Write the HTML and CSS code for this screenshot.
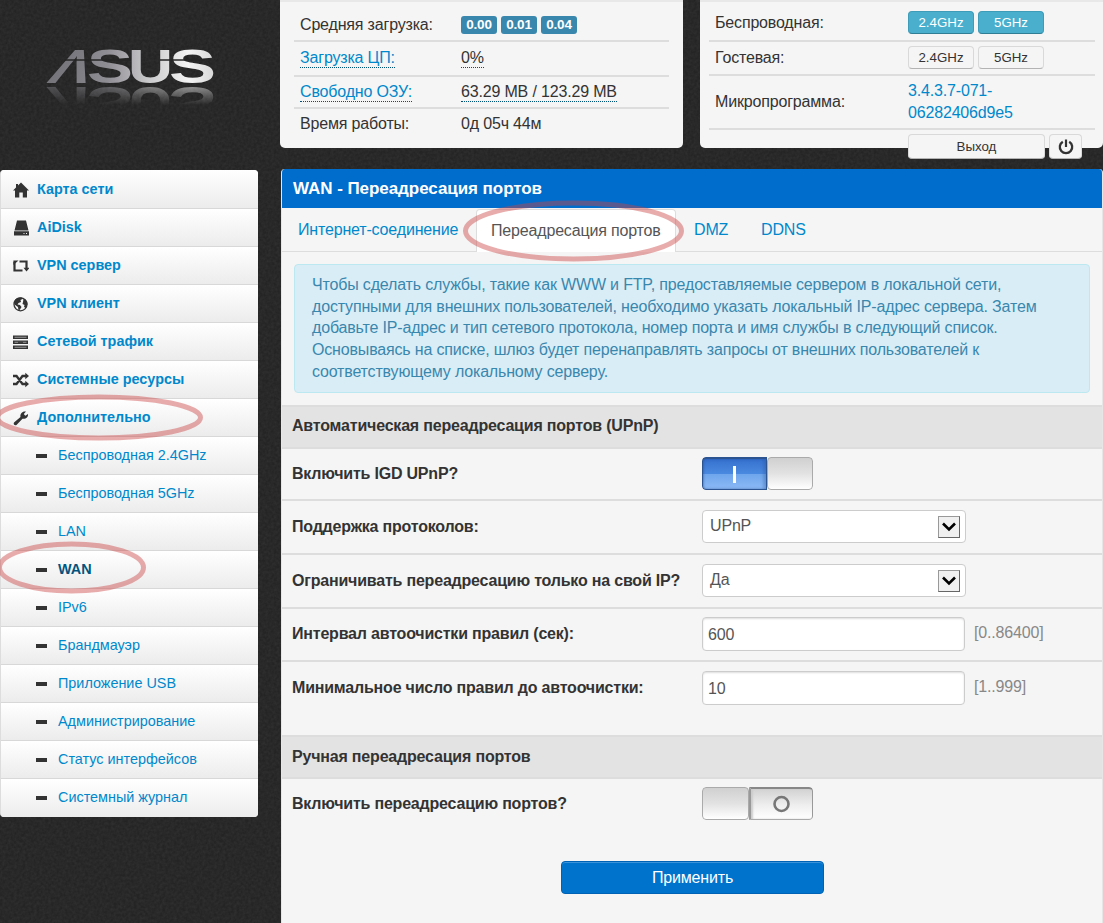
FILE: index.html
```html
<!DOCTYPE html>
<html lang="ru">
<head>
<meta charset="utf-8">
<title>WAN - Переадресация портов</title>
<link rel="stylesheet" href="styles.css">
</head>
<body>
<header class="top">
  <div class="brand">
    <svg class="logo" width="258" height="120" viewBox="0 0 258 120" role="img" aria-label="ASUS">
      <defs>
        <linearGradient id="metal" gradientUnits="userSpaceOnUse" x1="50" y1="0" x2="213" y2="0">
          <stop offset="0" stop-color="#77757c"/><stop offset=".35" stop-color="#8f8d94"/><stop offset=".6" stop-color="#c9c8ca"/><stop offset=".85" stop-color="#f4f4f4"/><stop offset="1" stop-color="#d9d9d9"/>
        </linearGradient>
        <linearGradient id="metalA" gradientUnits="userSpaceOnUse" x1="50" y1="0" x2="90" y2="0">
          <stop offset="0" stop-color="#77757c"/><stop offset="1" stop-color="#85838a"/>
        </linearGradient>
        <linearGradient id="fade" gradientUnits="userSpaceOnUse" x1="0" y1="86" x2="0" y2="105">
          <stop offset="0" stop-color="#fff" stop-opacity=".55"/><stop offset="1" stop-color="#fff" stop-opacity="0"/>
        </linearGradient>
        <mask id="mirror" maskUnits="userSpaceOnUse" x="40" y="86" width="190" height="20"><rect x="40" y="86" width="190" height="20" fill="url(#fade)"/></mask>
        <g id="word" class="word" fill="url(#metal)">
          <text x="46" y="83" transform="translate(33.5 0) skewX(-22)" textLength="40" lengthAdjust="spacingAndGlyphs" fill="url(#metalA)">Λ</text>
          <text x="87" y="83" textLength="46" lengthAdjust="spacingAndGlyphs">S</text>
          <text x="128" y="83" textLength="45" lengthAdjust="spacingAndGlyphs">U</text>
          <text x="169" y="83" textLength="47" lengthAdjust="spacingAndGlyphs">S</text>
        </g>
      </defs>
      <use href="#word"/>
      <path d="M64 60H131M160 60H205" stroke="#262626" stroke-width="1.4"/>
      <g mask="url(#mirror)"><use href="#word" transform="translate(0 170) scale(1 -1)"/></g>
    </svg>
  </div>
  <section class="panel load">
    <div class="row r1"><span>Средняя загрузка:</span><span class="badges"><b>0.00</b><b>0.01</b><b>0.04</b></span></div>
    <div class="row r2"><span><a class="dot">Загрузка ЦП:</a></span><span><i class="dot">0%</i></span></div>
    <div class="row r3"><span><a class="dot">Свободно ОЗУ:</a></span><span><i class="dot">63.29 MB / 123.29 MB</i></span></div>
    <div class="row r4"><span>Время работы:</span><span>0д 05ч 44м</span></div>
  </section>
  <section class="panel net">
    <div class="row n1"><span>Беспроводная:</span><span class="btns"><button class="mini on">2.4GHz</button><button class="mini on">5GHz</button></span></div>
    <div class="row n2"><span>Гостевая:</span><span class="btns"><button class="mini">2.4GHz</button><button class="mini">5GHz</button></span></div>
    <div class="row n3"><span>Микропрограмма:</span><a class="fw">3.4.3.7-071-<br>06282406d9e5</a></div>
    <div class="row n4"><span></span><span class="btns"><button class="mini exit">Выход</button><button class="mini power" aria-label="Питание"><svg width="16" height="16" viewBox="0 0 16 16"><path d="M4.800 2.700a6.200 6.200 0 1 0 6.400 0" fill="none" stroke="#333" stroke-width="2.300"/><path d="M8 .5V8" stroke="#333" stroke-width="2.200"/></svg></button></span></div>
  </section>
</header>

<div class="page">
  <nav class="side">
    <a class="item"><svg viewBox="0 0 16 16"><path d="M8 .5 16 8.500H14V15.500H9.800V10.500H6.300V15.500H2V8.500H0L3 5.500V2H5V3.500Z"/></svg>Карта сети</a>
    <a class="item"><svg viewBox="0 0 16 16"><path d="M4 .5H13L15.500 10.500H1.500ZM1 11.300H16V15.500H1ZM10.500 13v1h1v-1ZM13 13v1h1v-1Z" fill-rule="evenodd"/></svg>AiDisk</a>
    <a class="item"><svg viewBox="0 0 16 16"><path d="M1.500 4V12.500H9.500M6.500 3.500H13.500V10.500" fill="none" stroke="#333" stroke-width="2.200"/><path d="M.4 2.500H5.500L.4 7ZM10.500 9.800H16.500L13.500 13.500Z"/></svg>VPN сервер</a>
    <a class="item"><svg viewBox="0 0 16 16"><circle cx="7.500" cy="8.300" r="6.500" fill="none" stroke="#333" stroke-width="1.300"/><path d="M1 6C2 2 6 1 9 1.500L9.500 3 7.500 4 8 6 5.500 7 4.500 8.500 7 9 8.500 11 7 13.500 5.500 14.500 5 11 1.500 8.500ZM10.500 3 13 4 14.500 8 13 12 11 11 11.500 9 9.500 8 10 6Z"/></svg>VPN клиент</a>
    <a class="item"><svg viewBox="0 0 16 16"><path d="M0 1.500H15V5H0ZM0 6.500H15V10H0ZM0 11.500H15V15H0Z"/><path d="M1.500 3.250H13.500M1.500 8.250H13.500M1.500 13.250H13.500" stroke="#999" stroke-width="1.200"/><path d="M5 8.250H10" stroke="#333" stroke-width="1.200"/></svg>Сетевой трафик</a>
    <a class="item"><svg viewBox="0 0 16 16"><path d="M0 4H3.500L9.500 12H13M0 12H3.500L9.500 4H13" fill="none" stroke="#333" stroke-width="2.300"/><path d="M12.300 .8 16 4 12.300 7.200ZM12.300 8.800 16 12 12.300 15.200Z"/></svg>Системные ресурсы</a>
    <a class="item"><svg viewBox="0 0 16 16"><path d="M1 12.500 7.500 7C6.800 3.500 9.500.8 13 1.500L10.800 4 12.300 5.700 15 4C15.500 7.500 12.500 9.300 9.500 8.700L3.500 15C1.500 16 0 14 1 12.500Z"/></svg>Дополнительно</a>
    <a class="item sub">Беспроводная 2.4GHz</a>
    <a class="item sub">Беспроводная 5GHz</a>
    <a class="item sub">LAN</a>
    <a class="item sub current">WAN</a>
    <a class="item sub">IPv6</a>
    <a class="item sub">Брандмауэр</a>
    <a class="item sub">Приложение USB</a>
    <a class="item sub">Администрирование</a>
    <a class="item sub">Статус интерфейсов</a>
    <a class="item sub">Системный журнал</a>
  </nav>

  <main class="content">
    <h1 class="title">WAN - Переадресация портов</h1>
    <div class="tabs"><a class="tab t1">Интернет-соединение</a><a class="tab active">Переадресация портов</a><a class="tab t3">DMZ</a><a class="tab">DDNS</a></div>
    <p class="info">Чтобы сделать службы, такие как WWW и FTP, предоставляемые сервером в локальной сети,<br>доступными для внешних пользователей, необходимо указать локальный IP-адрес сервера. Затем<br>добавьте IP-адрес и тип сетевого протокола, номер порта и имя службы в следующий список.<br>Основываясь на списке, шлюз будет перенаправлять запросы от внешних пользователей к<br>соответствующему локальному серверу.</p>
    <h2 class="section">Автоматическая переадресация портов (UPnP)</h2>
    <div class="field f1"><label>Включить IGD UPnP?</label><span class="switch yes"><span class="track"><svg width="3" height="17"><rect width="3" height="17" fill="#fff"/></svg></span><span class="knob"></span></span></div>
    <div class="field f2"><label>Поддержка протоколов:</label><span class="box select">UPnP<span class="arrow"><svg width="14" height="10" viewBox="0 0 14 10"><path d="M1 1.500 7 7.500 13 1.500" fill="none" stroke="#000" stroke-width="2.600"/></svg></span></span></div>
    <div class="field f3"><label>Ограничивать переадресацию только на свой IP?</label><span class="box select">Да<span class="arrow"><svg width="14" height="10" viewBox="0 0 14 10"><path d="M1 1.500 7 7.500 13 1.500" fill="none" stroke="#000" stroke-width="2.600"/></svg></span></span></div>
    <div class="field f4"><label>Интервал автоочистки правил (сек):</label><span class="box text">600</span><span class="range">[0..86400]</span></div>
    <div class="field f5"><label>Минимальное число правил до автоочистки:</label><span class="box text">10</span><span class="range">[1..999]</span></div>
    <h2 class="section manual">Ручная переадресация портов</h2>
    <div class="field f6"><label>Включить переадресацию портов?</label><span class="switch no"><span class="knob"></span><span class="track"><svg width="18" height="18" viewBox="0 0 18 18"><circle cx="8.500" cy="9" r="7" fill="none" stroke="#777" stroke-width="2.600"/></svg></span></span></div>
    <div class="actions"><button class="apply">Применить</button></div>
  </main>
</div>

<svg class="marks" width="1103" height="923" aria-hidden="true">
  <ellipse cx="573.500" cy="231" rx="108" ry="28"/>
  <ellipse cx="99" cy="417.500" rx="101.500" ry="20.500"/>
  <ellipse cx="71.500" cy="567.500" rx="72" ry="23.500"/>
</svg>
</body>
</html>
```
FILE: styles.css
```css
* { box-sizing: border-box; }
body {
  margin: 0;
  position: relative;
  width: 1103px;
  height: 923px;
  overflow: hidden;
  font: 16px/22px "Liberation Sans", Arial, sans-serif;
  letter-spacing: -.17px;
  color: #333;
  background: #272727 url("data:image/svg+xml,%3Csvg xmlns='http://www.w3.org/2000/svg' width='200' height='200'%3E%3Cfilter id='n'%3E%3CfeTurbulence type='fractalNoise' baseFrequency='.35' numOctaves='2' stitchTiles='stitch'/%3E%3CfeColorMatrix values='0 0 0 0 .5 0 0 0 0 .5 0 0 0 0 .5 .12 0 0 0 -.03'/%3E%3C/filter%3E%3Crect width='200' height='200' fill='%23242424'/%3E%3Crect width='200' height='200' filter='url(%23n)'/%3E%3C/svg%3E");
}
a { color: #0088cc; text-decoration: none; }
button { font-family: inherit; padding: 0; color: #333; }

.top { display: grid; grid-template-columns: 258px 403px 403px; height: 169px; align-items: start; }
.brand { height: 120px; }
.logo { display: block; }
.word { font: bold 48px "Liberation Sans", Arial, sans-serif; letter-spacing: 0; }
.panel { height: 148px; background: #f5f5f5; border-radius: 0 0 5px 5px; border-top: 2px solid #e8e8e8; }
.load { margin-left: 22px; width: 403px; padding: 0 14px; }
.net { margin-left: 39px; width: 403px; padding: 0 8px 0 9px; }
.row { display: flex; align-items: center; border-bottom: 2px solid #ddd; }
.load .row > :first-child { width: 167px; padding-left: 6px; }
.net .row > :first-child { width: 199px; padding-left: 6px; }
.r1 { height: 40px; padding-top: 8px; }
.r2 { height: 35px; padding-bottom: 2px; }
.r3 { height: 32px; }
.r4 { height: 31px; border: 0; padding-bottom: 2px; }
.n1 { height: 40px; padding-top: 3px; }
.n2 { height: 34px; padding-bottom: 1px; }
.n3 { height: 54px; }
.n4 { height: 34px; border: 0; }
.dot { font-style: normal; display: inline-block; line-height: 19px; border-bottom: 1px dotted #00507a; }
.badges { display: flex; gap: 4px; }
.badges b { width: 36px; height: 18px; border-radius: 3px; background: #3a87ad; color: #fff; font-size: 13.500px; line-height: 18px; text-align: center; }
.btns { display: flex; gap: 4px; flex: none; }
.mini { width: 66px; height: 23px; border: 1px solid #d9d9d9; border-bottom-color: #b3b3b3; border-radius: 4px; background: #f5f5f5; font-size: 13.300px; line-height: 20px; }
.mini.on { background: #49afcd; border-color: #3f9cb8; border-bottom-color: #2f7e96; color: #fff; }
.n4 .btns { padding-bottom: 1px; }
.mini.exit { width: 137px; height: 25px; }
.mini.power { width: 33px; height: 25px; display: flex; align-items: center; justify-content: center; }

.page { display: grid; grid-template-columns: 258px 822px; column-gap: 23px; height: 754px; }
.side { margin-top: 1px; height: 647px; border-radius: 4px; overflow: hidden; border-left: 1px solid #ddd; background: #eee; }
.item { display: flex; align-items: center; height: 38px; padding: 0 0 1px 12px; gap: 8px; font-size: 14.400px; letter-spacing: 0; font-weight: bold; background: linear-gradient(#fff, #ececec); border-bottom: 1px solid #d8d8d8; }
.item:first-child { height: 39px; }
.item:last-child { border: 0; padding-bottom: 2px; }
.item svg { width: 16px; height: 16px; fill: #333; position: relative; top: 1px; }
.sub { font-weight: normal; gap: 11px; padding-left: 35px; }
.sub::before { content: ""; width: 11px; height: 4px; margin-top: 2px; background: #333; }
.current { font-weight: bold; color: #005580; }

.content { background: #f5f5f5; border-radius: 4px 4px 0 0; overflow: hidden; border-right: 1px solid #e6e6e6; border-left: 1px solid #e6e6e6; }
.title { margin: 0 -1px; height: 39px; padding-left: 12px; background: #006dcc; color: #fff; font-size: 17px; letter-spacing: -.06px; line-height: 39px; }
.tabs { display: flex; height: 44px; border-bottom: 1px solid #ddd; padding-top: 1px; line-height: 42px; }
.tab { padding-left: 16px; }
.t1 { width: 194px; }
.active { width: 200px; height: 43px; padding-left: 14px; background: #fff; border: 1px solid #ddd; border-bottom: 0; border-radius: 4px 4px 0 0; color: #555; line-height: 41px; }
.t3 { width: 67px; margin-left: 2px; }
.info { margin: 12px 12px 12px; height: 129px; padding: 9px 17px; border: 1px solid #bce8f1; border-radius: 4px; background: #d9edf7; color: #3a87ad; line-height: 21.700px; white-space: nowrap; }
.section { margin: 0; height: 44px; padding-left: 10px; border: solid #ddd; border-width: 2px 0; background: #e3e3e3; font-size: 16px; letter-spacing: -.19px; line-height: 38px; }
.manual { line-height: 40px; }
.field { display: flex; align-items: flex-start; padding: 8px 0 0 10px; border-bottom: 2px solid #ddd; }
.field label { width: 410px; font-weight: bold; letter-spacing: -.2px; line-height: 33px; white-space: nowrap; }
.f1 { height: 52px; }
.f2, .f3 { height: 54px; padding-top: 9px; }
.f4 { height: 53px; }
.f5 { height: 73px; padding-top: 9px; border: 0; }
.f6 { height: 82px; border: 0; }
.box { width: 264px; height: 33px; background: #fff; border: 1px solid #ccc; border-radius: 4px; color: #555; line-height: 29px; }
.select { display: flex; justify-content: space-between; padding: 0 5px 0 7px; }
.text { height: 34px; width: 263px; padding-left: 5px; line-height: 33px; box-shadow: inset 0 1px 2px #ddd; }
.arrow { display: flex; align-items: center; justify-content: center; width: 22px; height: 22px; margin-top: 5px; background: #f0f0f0; border: 1px solid #999; border-right-color: #666; border-bottom-color: #666; }
.range { padding-left: 9px; color: #888; line-height: 31px; }
.switch { display: flex; width: 111px; height: 33px; border-radius: 4px; overflow: hidden; }
.track { display: flex; align-items: center; justify-content: center; width: 65px; }
.yes .track { background: linear-gradient(#3571cf, #4b8ae0 50%, #6fa6ec 51%, #8cbaf6); border: 1px solid #2c5490; border-width: 2px 1px 1px; box-shadow: inset -3px 0 3px rgba(40, 80, 150, .3), inset 1px 0 2px rgba(30, 70, 140, .4); border-radius: 4px 0 0 4px; }
.knob { flex: 1; border: 1px solid #aaa; border-radius: 4px; background: linear-gradient(#d0d0d0, #e2e2e2 50%, #fff); }
.no .track { width: 64px; border: 1px solid #888; border-width: 2px 1px 1px 2px; border-color: #888 #999 #aaa #999; border-radius: 0 4px 4px 0; background: linear-gradient(#d2d2d2, #efefef 55%, #fff); box-shadow: inset 2px 0 2px #ccc; }
.actions { padding-left: 279px; }
.apply { display: block; width: 263px; height: 33px; border: 1px solid #0062b5; border-radius: 4px; background: #0074cc; color: #fff; font-size: 16px; letter-spacing: -.17px; box-shadow: inset 0 1px 0 #3b93da; }

.marks { position: absolute; left: 0; top: 0; pointer-events: none; fill: none; stroke: rgba(203, 68, 68, .445); stroke-width: 5; }
```
